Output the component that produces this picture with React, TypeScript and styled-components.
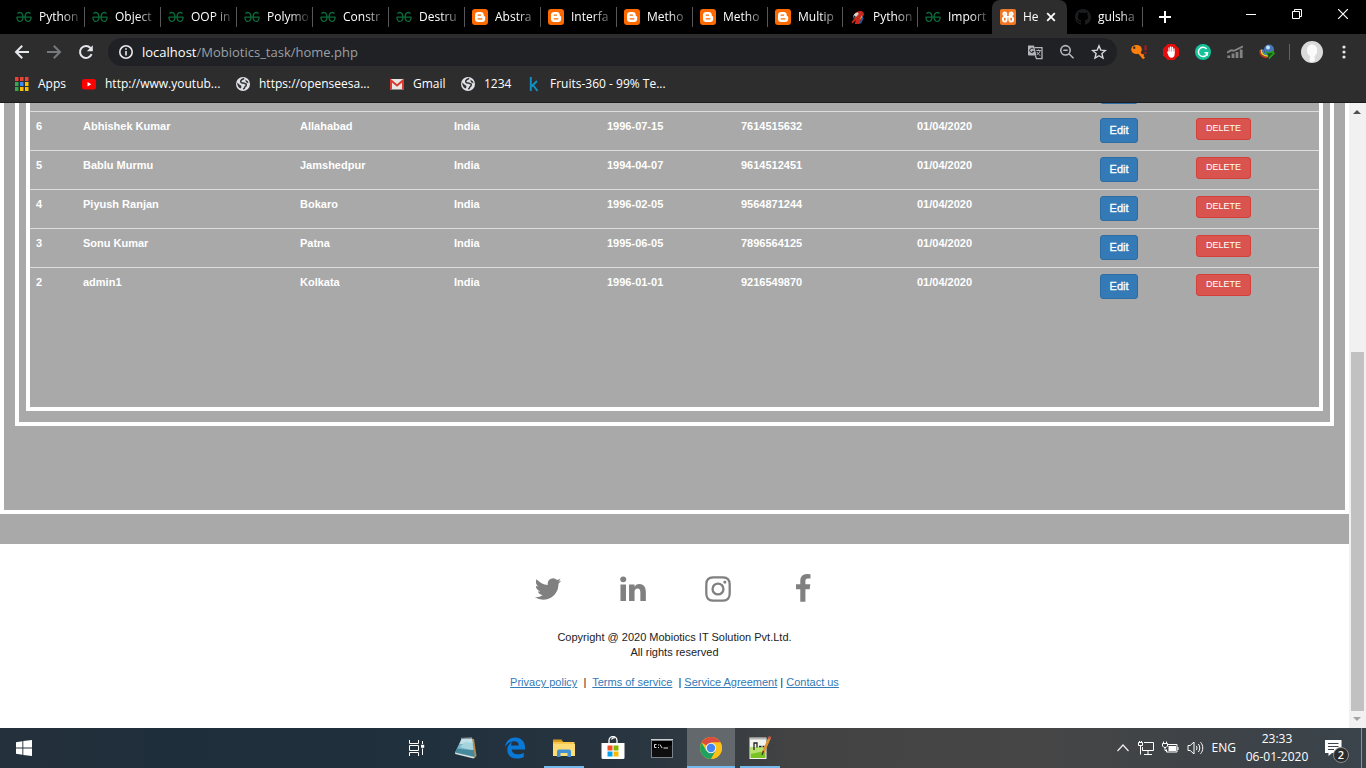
import React from "react";
import styled, { createGlobalStyle, css } from "styled-components";

const uiFont = `"Segoe UI", "Open Sans", "Noto Sans", sans-serif`;
const pageFont = `"Liberation Sans", Arial, sans-serif`;

const GlobalStyle = createGlobalStyle`
  *, *::before, *::after { box-sizing: border-box; }
  html, body, #root { height: 100%; margin: 0; }
  body { background: #fff; overflow: hidden; }
  button { font: inherit; color: inherit; background: none; border: 0; padding: 0; margin: 0; }
  svg { display: block; flex: none; }
`;

const Screen = styled.div`
  display: flex;
  flex-direction: column;
  height: 100vh;
`;

/* ---------- browser chrome ---------- */

const TabStrip = styled.header`
  display: flex;
  height: 34px;
  padding-left: 8px;
  background: #000;
  color: #fff;
  font: 12px/16px ${uiFont};
`;

const TabList = styled.div`
  display: grid;
  grid-template-columns: repeat(9, minmax(0, 76fr)) repeat(6, minmax(0, 75fr));
  flex: 0 1 1134px;
  min-width: 0;
`;

const Tab = styled.button<{ $active?: boolean; $divider?: boolean }>`
  position: relative;
  display: flex;
  align-items: center;
  min-width: 0;
  gap: 7px;
  padding: 0 ${(p) => (p.$active ? 11 : 2)}px 0 8px;
  ${(p) =>
    p.$divider &&
    css`
      &::after {
        content: "";
        position: absolute;
        right: -1px;
        top: 7px;
        width: 1px;
        height: 20px;
        background: #55575a;
      }
    `}
  ${(p) =>
    p.$active &&
    css`
      background: #2d2d2d;
      border-radius: 8px 8px 0 0;
    `}
`;

const TabTitle = styled.span`
  flex: 1;
  min-width: 0;
  overflow: hidden;
  text-align: left;
  white-space: nowrap;
  mask-image: linear-gradient(to right, #000 22px, rgba(0, 0, 0, 0.2) 40px);
`;

const NewTab = styled.button`
  display: grid;
  place-items: center;
  width: 46px;
`;

const WindowControls = styled.div`
  display: flex;
  height: 28px;
  margin-left: auto;
`;

const WindowButton = styled.button`
  display: grid;
  place-items: center;
  width: 46px;
`;

const Toolbar = styled.div`
  display: flex;
  align-items: center;
  height: 36px;
  padding: 0 6px;
  background: #2d2d2d;
  color: #dee1e6;
`;

const ToolButton = styled.button`
  display: grid;
  place-items: center;
  flex: none;
  width: 32px;
  height: 28px;
`;

const AddressBar = styled.div`
  display: flex;
  align-items: center;
  flex: 1;
  min-width: 0;
  height: 28px;
  margin: 0 6px;
  padding-left: 10px;
  padding-right: 2px;
  border-radius: 14px;
  background: #202124;
`;

const Address = styled.div`
  flex: 1;
  min-width: 0;
  padding-left: 8px;
  overflow: hidden;
  white-space: nowrap;
  color: #9aa0a6;
  font: 13px/20px ${uiFont};
  b { font-weight: 400; color: #fff; }
`;

const ToolDivider = styled.span`
  width: 1px;
  height: 16px;
  margin: 0 6px;
  background: #5f6368;
`;

const Bookmarks = styled.nav`
  display: flex;
  height: 33px;
  padding: 4px 15px 8px;
  background: #2d2d2d;
  border-bottom: 1px solid #1c1c1c;
  color: #fff;
  font: 12px/20px ${uiFont};
`;

const Bookmark = styled.a<{ $width: number }>`
  display: flex;
  align-items: center;
  gap: 9px;
  width: ${(p) => p.$width}px;
  color: inherit;
  text-decoration: none;
  white-space: nowrap;
`;

/* ---------- web page ---------- */

const Viewport = styled.div`
  display: flex;
  flex: 1;
  min-height: 0;
`;

const Page = styled.main`
  display: flex;
  flex: 1;
  flex-direction: column;
  justify-content: flex-end;
  min-width: 0;
  overflow: hidden;
  background: #a9a9a9;
  font: 11px/15px ${pageFont};
`;

const Frame = styled.div<{ $pad: string }>`
  flex: none;
  border: 4px solid #fff;
  padding: ${(p) => p.$pad};
`;

const Members = styled.table`
  width: 100%;
  table-layout: fixed;
  border-collapse: collapse;
  color: #fff;
  font-weight: 700;
  line-height: 17px;
`;

const Row = styled.tr`
  height: 39px;
`;

const Cell = styled.td`
  padding: 6px 6px 7px;
  border-top: 1px solid #ddd;
  vertical-align: top;
`;

const ActionButton = styled.button<{ $danger?: boolean }>`
  display: block;
  width: ${(p) => (p.$danger ? 55 : 38)}px;
  height: ${(p) => (p.$danger ? 22 : 25)}px;
  border: 1px solid ${(p) => (p.$danger ? "#d43f3a" : "#2e6da4")};
  border-radius: 3px;
  background: ${(p) => (p.$danger ? "#d9534f" : "#337ab7")};
  color: #fff;
  font: ${(p) => (p.$danger ? "9px/13px" : "11px/15px")} ${pageFont};
  -webkit-text-stroke: ${(p) => (p.$danger ? "0" : "0.3px #fff")};
`;

const Footer = styled.footer`
  flex: none;
  height: 184px;
  margin-top: 30px;
  padding-top: 30px;
  background: #fff;
  color: #222;
  text-align: center;
`;

const Social = styled.div`
  display: flex;
  justify-content: center;
  gap: 55px;
  margin-bottom: 26px;
  padding-left: 2px;
  color: #808080;
  a { color: inherit; }
`;

const Line = styled.p`
  margin: 0;
`;

const FooterLinks = styled(Line)`
  margin-top: 15px;
  white-space: pre-wrap;
  a { color: #337ab7; text-decoration: underline; }
`;

const Scrollbar = styled.div`
  display: flex;
  flex-direction: column;
  align-items: center;
  width: 17px;
  padding-right: 1px;
  background: #f1f1f1;
`;

const ScrollSpace = styled.div`
  flex: 1;
  padding-top: 7px;
`;

const Thumb = styled.div`
  width: 13px;
  height: 57.5%;
  margin-bottom: 6px;
  background: #c1c1c1;
`;

const ScrollEnd = styled.div`
  height: 11px;
`;

/* ---------- taskbar ---------- */

const Taskbar = styled.footer`
  display: flex;
  height: 40px;
  background: linear-gradient(90deg, #24313c 0%, #1f2e3b 12%, #20303d 32%, #2a3640 48%, #434343 58%, #464646 76%, #3e4347 88%, #3a434b 100%);
  color: #fff;
  font: 12px/18px ${uiFont};
`;

const Start = styled.button`
  display: grid;
  place-items: center;
  width: 48px;
`;

const Apps = styled.div`
  display: flex;
  gap: 1px;
  margin-left: 25%;
  padding-left: 3px;
`;

const AppButton = styled.button<{ $running?: boolean; $active?: boolean }>`
  display: grid;
  place-items: center;
  width: 48px;
  height: 40px;
  ${(p) => p.$active && "background: #63686c;"}
  ${(p) =>
    p.$running &&
    css`
      background-image: linear-gradient(#76b9ed, #76b9ed);
      background-repeat: no-repeat;
      background-position: bottom center;
      background-size: ${p.$active ? "48px" : "40px"} 2px;
    `}
`;

const Tray = styled.div`
  display: flex;
  align-items: center;
  gap: 8px;
  margin-left: auto;
`;

const Clock = styled.time`
  width: 64px;
  margin-left: 1px;
  margin-right: 5px;
  text-align: center;
  white-space: nowrap;
`;

const Notices = styled.button`
  position: relative;
  display: flex;
  align-items: center;
  width: 34px;
  height: 40px;
  padding-left: 3px;
`;

const Badge = styled.span`
  position: absolute;
  left: 11px;
  top: 19px;
  width: 16px;
  height: 16px;
  border: 1px solid #8d8d8d;
  border-radius: 50%;
  background: #2c2c2c;
  font: 600 11px/14px ${uiFont};
`;

const ShowDesktop = styled.span`
  width: 5px;
  height: 40px;
  margin-left: -3px;
  border-left: 1px solid #8b9095;
`;

/* ---------- icons ---------- */

const Geeks = () => (
  <svg width="16" height="16" viewBox="0 0 16 16" fill="none" stroke="#0b6b3a" strokeWidth="1.3">
    <path d="M.5 8.200h15M1.500 4.600C2.500 3.500 4 3.300 5.200 3.900 7.600 5.200 7.500 10.600 5.300 12 3.500 13 1.300 12 1 9.500V8.200M14.500 4.600C13.500 3.500 12 3.300 10.800 3.900 8.400 5.200 8.500 10.600 10.700 12c1.800 1 4 0 4.300-2.500V8.200" />
  </svg>
);

const Blogger = () => (
  <svg width="16" height="16" viewBox="0 0 16 16">
    <rect width="16" height="16" rx="3" fill="#ff6a00" />
    <path d="M6.200 3h2.600C10.600 3 11.800 4.300 11.800 6c0 .9.2 1.100.8 1.200.5.100.6.300.6.700V10c0 1.900-1.200 3-3 3H6c-1.800 0-3-1.200-3-3V6c0-1.800 1.300-3 3.200-3z" fill="#fff" />
    <path d="M6.200 6.200h2.300M6.200 9.800h3.700" stroke="#ff6a00" strokeWidth="1.300" strokeLinecap="round" />
  </svg>
);

const Parrot = () => (
  <svg width="16" height="16" viewBox="0 0 16 16">
    <path d="M5 4.500C7 1.500 12.500.8 13.800 4c.7 2.200-1 4-2.300 6l-2 5H4.800l1-4L2.500 14.500 1.500 13 5.500 8z" fill="#c6281c" />
    <path d="M5.500 4c1.500-1 3.200-.5 3.200 1L6.500 7.500 3.500 9.500C2.800 7 3.800 5 5.500 4z" fill="#d9d2ca" />
    <path d="M4.200 6.500L2.500 10.500l3.300-3z" fill="#23201f" />
    <path d="M12.500 6.500l1 3-2.500 5H9.500z" fill="#1f5da8" />
    <path d="M12 6L9.500 10.500l2.800-2z" fill="#e0a321" />
  </svg>
);

const Xampp = () => (
  <svg width="16" height="16" viewBox="0 0 16 16">
    <rect width="16" height="16" rx="2" fill="#f37623" />
    <g fill="none" stroke="#fff" strokeWidth="1.900" strokeLinecap="round">
      <path d="M3.300 5.200C3.300 3 6.300 3 6.300 5.200S5.800 7.800 4.700 7.900C2.300 8.200 2.300 12.600 4.700 12.600S6.700 10.500 6.500 8z" />
      <path d="M12.700 5.200C12.700 3 9.700 3 9.700 5.200s.5 2.600 1.600 2.700c2.400.3 2.400 4.700 0 4.700S9.300 10.500 9.500 8z" />
      <path d="M6.300 7.900h3.400" />
    </g>
  </svg>
);

const Octocat = () => (
  <svg width="16" height="16" viewBox="0 0 16 16" fill="#1b1c1e">
    <path d="M8 0C3.580 0 0 3.580 0 8c0 3.540 2.290 6.530 5.470 7.590.4.070.55-.17.55-.38 0-.19-.01-.82-.01-1.490-2.010.37-2.530-.49-2.690-.94-.09-.23-.48-.94-.82-1.130-.28-.15-.68-.52-.01-.53.63-.01 1.080.58 1.230.82.72 1.210 1.870.87 2.330.66.070-.52.28-.87.51-1.070-1.780-.2-3.640-.89-3.640-3.950 0-.87.31-1.590.82-2.150-.08-.2-.36-1.020.08-2.120 0 0 .67-.21 2.200.82.64-.18 1.320-.27 2-.27s1.360.09 2 .27c1.530-1.040 2.200-.82 2.200-.82.44 1.100.16 1.920.08 2.120.51.56.82 1.270.82 2.150 0 3.070-1.870 3.750-3.650 3.950.29.25.54.73.54 1.480 0 1.070-.01 1.930-.01 2.200 0 .21.15.46.55.38A8.010 8.010 0 0 0 16 8c0-4.420-3.580-8-8-8z" />
  </svg>
);

const Cross = () => (
  <svg width="10" height="10" viewBox="0 0 10 10" stroke="#fff" strokeWidth="1.800">
    <path d="M1.200 1.200l7.600 7.600M8.800 1.200L1.200 8.800" />
  </svg>
);

const Globe = () => (
  <svg width="14" height="14" viewBox="0 0 14 14">
    <circle cx="7" cy="7" r="7" fill="#dfe1e5" />
    <path d="M8.200 1.500C6.500 2 5 2.600 4.700 4c-.2 1.500 1 2 2.600 2 1.500.1 1.800 1.200 3 1.300l-.3 1.600c-1.200.2-1.300 1.200-1.500 2L7.300 12.300" fill="none" stroke="#333437" strokeWidth="1.500" />
    <path d="M1.200 5.600l2.500 2.200 1.600 1v1.900l-1 .8C2.300 10.500 1 8 1.200 5.600z" fill="#333437" />
    <path d="M9.200 2.500l2.600 1.700.8 2-2.600-.9z" fill="#333437" />
  </svg>
);

const AppsGrid = () => {
  const colors = ["#ea4335", "#ea4335", "#ea4335", "#34a853", "#4285f4", "#fbbc05", "#34a853", "#fbbc05", "#fbbc05"];
  return (
    <svg width="14" height="14" viewBox="0 0 14 14">
      {colors.map((c, i) => (
        <rect key={i} x={(i % 3) * 5} y={Math.floor(i / 3) * 5} width="3.500" height="4" fill={c} />
      ))}
    </svg>
  );
};

const YouTube = () => (
  <svg width="14" height="14" viewBox="0 0 14 14">
    <rect y="2" width="14" height="10.500" rx="2.500" fill="#f00" />
    <path d="M5.500 5v4.500L9.300 7.200z" fill="#fff" />
  </svg>
);

const Gmail = () => (
  <svg width="14" height="14" viewBox="0 0 14 14">
    <rect y="2" width="14" height="10.500" rx="1" fill="#e8e6e4" />
    <path d="M1 12.500V3.500L7 8.500l6-5v9" fill="none" stroke="#d93a2d" strokeWidth="2" />
  </svg>
);

const Kaggle = () => (
  <svg width="14" height="16" viewBox="0 0 14 16" fill="none" stroke="#1590c6" strokeWidth="1.900">
    <path d="M3.800 1v14M10 5L4.500 10.500M6 9l4.500 6" />
  </svg>
);

const Back = ({ dim }: { dim?: boolean }) => (
  <svg width="16" height="16" viewBox="0 0 16 16" fill="none" stroke={dim ? "#77797c" : "#e4e6ea"} strokeWidth="2" transform={dim ? "scale(-1 1)" : undefined}>
    <path d="M15 8H2.500M8.200 1.700L2 8l6.200 6.300" />
  </svg>
);

const Reload = () => (
  <svg width="16" height="16" viewBox="0 0 16 16" fill="none" stroke="#e4e6ea" strokeWidth="2">
    <path d="M13.600 10.200A6 6 0 1 1 12.500 4" />
    <path d="M14.800 1.200v6H8.800z" fill="#e4e6ea" stroke="none" />
  </svg>
);

const Info = () => (
  <svg width="16" height="16" viewBox="0 0 16 16" fill="none" stroke="#e8eaed" strokeWidth="1.600">
    <circle cx="8" cy="8" r="6.200" />
    <path d="M8 7v4.500M8 4.200v1.600" />
  </svg>
);

const Translate = () => (
  <svg width="16" height="16" viewBox="0 0 16 16" fill="none">
    <path d="M1 1.500h6l2.500 10H2a1 1 0 0 1-1-1z" fill="#b3b6ba" />
    <path d="M7.500 3.700H15v11H9.500L8.300 11.500" stroke="#b3b6ba" strokeWidth="1.300" />
    <path d="M6.700 5A2.200 2.200 0 1 0 7 7.300H5" stroke="#202124" strokeWidth="1" />
    <path d="M9.300 6.500h4.600M11.500 5.500v1M13.200 6.500c-.4 1.800-1.800 3.500-3 4.200M10 8c.7 1.500 2 2.800 3.300 3.400" stroke="#b3b6ba" strokeWidth="1" />
  </svg>
);

const ZoomOut = () => (
  <svg width="16" height="16" viewBox="0 0 16 16" fill="none" stroke="#b5b8bd" strokeWidth="1.600">
    <circle cx="6.500" cy="6.300" r="4.700" />
    <path d="M10 9.800l4.500 4.500M4.300 6.300h4.400" />
  </svg>
);

const Star = () => (
  <svg width="16" height="16" viewBox="0 0 16 16" fill="none" stroke="#d5d7db" strokeWidth="1.400">
    <path d="M8 1.800l1.800 4.300 4.600.400-3.500 3 1.100 4.600L8 11.700l-4 2.400 1.100-4.600-3.500-3 4.600-.400z" />
  </svg>
);

const KeyIcon = () => (
  <svg width="18" height="16" viewBox="0 0 18 16">
    <path d="M8.500 8l5.500 6.500" stroke="#ff7f0e" strokeWidth="2.600" />
    <path d="M11.500 12l2.200-1.500" stroke="#ff7f0e" strokeWidth="2" />
    <ellipse cx="6.500" cy="5.500" rx="5.300" ry="4.500" fill="#ff7f0e" />
    <circle cx="4.200" cy="3.800" r="1.200" fill="#2d2d2d" />
    <path d="M15.500 1.500v5M15.500 8v2" stroke="#c1121f" strokeWidth="2" />
  </svg>
);

const Adblock = () => (
  <svg width="16" height="16" viewBox="0 0 16 16">
    <path d="M4.700 0h6.600L16 4.700v6.600L11.300 16H4.700L0 11.300V4.700z" fill="#e40d0d" />
    <path d="M6 8V4M7.700 7.500V2.900M9.400 7.500V3.300M11 8.500V4.800" stroke="#fff" strokeWidth="1.300" strokeLinecap="round" />
    <path d="M4 7.800l1.300-.3h6.300v2.800c0 2.300-1.300 3.500-3 3.500-2 0-2.600-1-3.400-2.700z" fill="#fff" />
  </svg>
);

const Grammarly = () => (
  <svg width="16" height="16" viewBox="0 0 16 16">
    <circle cx="8" cy="8" r="8" fill="#15c39a" />
    <path d="M11.500 5A4.600 4.600 0 1 0 12.500 8.700H9.500M12.300 8.700v3" fill="none" stroke="#fff" strokeWidth="1.500" />
  </svg>
);

const Analytics = () => (
  <svg width="16" height="16" viewBox="0 0 16 16" fill="none" stroke="#828282">
    <path d="M1.800 14v-2.500M6 14V9.500M10 14V8M14.200 14V5.500" strokeWidth="2.800" />
    <path d="M0 8.700L4 6.300l3 .5L16 2.500" strokeWidth="2" />
  </svg>
);

const Idm = () => (
  <svg width="16" height="16" viewBox="0 0 16 16">
    <circle cx="10" cy="5.500" r="5" fill="#4578b8" />
    <circle cx="9" cy="3.500" r="2" fill="#c7e0f5" />
    <g fill="none" strokeWidth="1.600">
      <path d="M1.200 6C.5 10.500 3.500 13.500 8.500 13.500" stroke="#c9301f" />
      <path d="M2.500 5.500C2 9.500 4.500 12 9 12" stroke="#e8d81e" />
      <path d="M4 5.500c-.3 3 1.500 5 5 5" stroke="#3f8fd0" />
    </g>
    <path d="M6 7.500l4.500.5L14 6.500l2 3-6 6-.5-3.500z" fill="#2b9a1f" />
    <path d="M8 9.500l6-.5-3.800 4z" fill="#10560c" />
  </svg>
);

const Avatar = () => (
  <svg width="22" height="22" viewBox="0 0 22 22">
    <circle cx="11" cy="11" r="11" fill="#dadada" />
    <path d="M11 3.500c3.300 0 5.200 2.500 5.200 5.700 0 2.800-1 5-2.700 6l.5 4.300c-1.500 1.500-4 1.800-5.500 1l.5-5.500c-2-1-3-3-3-5.800C6 6 8 3.500 11 3.500z" fill="#fafafa" />
  </svg>
);

const Dots = () => (
  <svg width="4" height="14" viewBox="0 0 4 14" fill="#e4e6ea">
    <circle cx="2" cy="2" r="1.600" />
    <circle cx="2" cy="7" r="1.600" />
    <circle cx="2" cy="12" r="1.600" />
  </svg>
);

const Arrow = ({ down }: { down?: boolean }) => (
  <svg width="8" height="4" viewBox="0 0 8 4" fill={down ? "#a3a3a3" : "#505050"}>
    <path d={down ? "M0 0h8L4 4z" : "M0 4h8L4 0z"} />
  </svg>
);

const socials: [string, string][] = [
  ["Twitter", "M1684 408q-67 98-162 167 1 14 1 42 0 130-38 259.500t-115.500 248.500-184.500 210.500-258 146-323 54.500q-271 0-496-145 35 4 78 4 225 0 401-138-105-2-188-64.500t-114-159.500q33 5 61 5 43 0 85-11-112-23-185.500-111.500t-73.500-205.500v-4q68 38 146 41-66-44-105-115t-39-154q0-88 44-163 121 149 294.500 238.500t371.500 99.500q-8-38-8-74 0-134 94.500-228.500t228.500-94.500q140 0 236 102 109-21 205-78-37 115-142 178 93-10 186-50z"],
  ["LinkedIn", "M477 625v991h-330v-991h330zm21-306q1 73-50.500 122t-135.500 49h-2q-82 0-132-49t-50-122q0-74 51.500-122.500t134.500-48.500 133 48.500 51 122.500zm1166 729v568h-329v-530q0-105-40.500-164.500t-126.500-59.500q-63 0-105.500 34.500t-63.500 85.500q-11 30-11 81v553h-329q2-399 2-647t-1-296l-1-48h329v144h-2q20-32 41-56t56.500-52 87-43.500 114.500-15.500q171 0 275 113.500t104 332.500z"],
  ["Instagram", "M1152 896q0-106-75-181t-181-75-181 75-75 181 75 181 181 75 181-75 75-181zm138 0q0 164-115 279t-279 115-279-115-115-279 115-279 279-115 279 115 115 279zm108-410q0 38-27 65t-65 27-65-27-27-65 27-65 65-27 65 27 27 65zm-502-220q-7 0-76.500-.5t-105.500 0-96.500 3-103 10-71.500 18.500q-50 20-88 58t-58 88q-11 29-18.500 71.500t-10 103-3 96.500 0 105.500.5 76.500-.5 76.500 0 105.500 3 96.500 10 103 18.500 71.500q20 50 58 88t88 58q29 11 71.500 18.500t103 10 96.500 3 105.500 0 76.500-.5 76.500.5 105.500 0 96.500-3 103-10 71.500-18.500q50-20 88-58t58-88q11-29 18.500-71.500t10-103 3-96.500 0-105.500-.5-76.500.5-76.500 0-105.500-3-96.500-10-103-18.500-71.500q-20-50-58-88t-88-58q-29-11-71.500-18.500t-103-10-96.500-3-105.500 0-76.500.5zm768 630q0 229-5 317-10 208-124 322t-322 124q-88 5-317 5t-317-5q-208-10-322-124t-124-322q-5-88-5-317t5-317q10-208 124-322t322-124q88-5 317-5t317 5q208 10 322 124t124 322q5 88 5 317z"],
  ["Facebook", "M1343 12v264h-157q-86 0-116 36t-30 108v189h293l-39 296h-254v759h-306v-759h-255v-296h255v-218q0-186 104-288.500t277-102.500q147 0 228 12z"],
];

const WindowsLogo = () => (
  <svg width="16" height="16" viewBox="0 0 16 16" fill="#fff">
    <path d="M0 2.300L6.400 1.300V7.500H0zM7.300 1.100L16 0v7.500H7.300zM0 8.500h6.400v6.200L0 13.700zM7.300 8.500H16V16L7.300 14.900z" />
  </svg>
);

const TaskView = () => (
  <svg width="17" height="16" viewBox="0 0 17 16" fill="none" stroke="#fff">
    <path d="M1.500 0v3.500h9V0M1.500 16v-3.500h9V16M1.500 5.500h9v5h-9zM14.500 1v3M14.500 8.500V15" />
    <path d="M13 4.800h3.200v3H13z" fill="#fff" stroke="none" />
  </svg>
);

const Notepad = () => (
  <svg width="24" height="22" viewBox="0 0 24 22">
    <path d="M17 1.500l3 .5 2.500 17-2.500 2.500z" fill="#b98a4a" />
    <path d="M7.500 2l10.500-.3L20.500 20 1 15.500z" fill="#79b6c6" />
    <path d="M7.500 2L18 1.700l.8 4.800L5.500 7z" fill="#c2e0e8" />
    <path d="M11 5l7.500 1L19.500 14 6 10z" fill="#a5d4de" />
    <path d="M3 11.500l8 1 9 .5.800 7L1 15.500z" fill="#46899d" />
    <path d="M1 15.500L20.500 20l-1 1.500L1.200 17z" fill="#d8e4e6" />
    <path d="M7.500 1.500L18 1" stroke="#d7dbdc" strokeWidth="1.500" strokeDasharray="1 1" />
  </svg>
);

const Edge = () => (
  <svg width="20" height="22" viewBox="0 0 20 22">
    <path d="M0 10C.8 4 4.800.5 10.300.5 16.500.5 20 5 20 10.200v2.300H6.800c.2 3.500 3 4.800 6 4.800 2.300 0 4.200-.6 6-1.600v4.200c-2 1.100-4.500 1.600-7 1.600-5.800 0-9.500-3.300-9.500-8.800 0-3.600 1.900-6.200 5-7.700-.7.900-1.200 2-1.300 3.500H13.700c.1-2.800-1.500-4.300-4.500-4.300C5.500 4.200 2.300 6.500 0 10z" fill="#0a78d6" />
  </svg>
);

const Explorer = () => (
  <svg width="22" height="20" viewBox="0 0 22 20">
    <path d="M0 2h8l2 2h11.500v14H0z" fill="#f9c84c" />
    <path d="M0 1.500h8.500L10 4H0z" fill="#d99b1c" />
    <path d="M0 6h22v12H0z" fill="#fddc75" />
    <path d="M4 19v-5.500A2 2 0 0 1 6 11.500h10a2 2 0 0 1 2 2V19h-3.500v-4h-7v4z" fill="#3f91d4" />
  </svg>
);

const Store = () => (
  <svg width="24" height="24" viewBox="0 0 24 24">
    <path d="M8 7V4.500a4 4 0 0 1 8 0V7M10.500 3.500A3 3 0 0 1 13.500 2" fill="none" stroke="#fff" strokeWidth="1.300" />
    <path d="M.5 7h23v14.500a1.500 1.500 0 0 1-1.500 1.500H2A1.500 1.500 0 0 1 .5 21.500z" fill="#fff" />
    <path d="M6.500 9.500h5v5h-5z" fill="#f25022" />
    <path d="M12.500 9.500h5v5h-5z" fill="#7fba00" />
    <path d="M6.500 15.500h5v5h-5z" fill="#00a4ef" />
    <path d="M12.500 15.500h5v5h-5z" fill="#ffb900" />
  </svg>
);

const Terminal = () => (
  <svg width="22" height="19" viewBox="0 0 22 19">
    <rect width="22" height="19" fill="#7c8388" />
    <rect x="1" y="2" width="20" height="16" fill="#000" />
    <path d="M0 .5h22" stroke="#c9ced1" />
    <path d="M5.500 5.500H3.500v3h2M7.500 5.500v1M7.500 8v1M9 5.500l2 3.500M12.500 9H17" fill="none" stroke="#ddd" />
    <path d="M1 11L21 6v12H1z" fill="#fff" opacity=".06" />
  </svg>
);

const Chrome = () => (
  <svg width="22" height="22" viewBox="0 0 22 22">
    <circle cx="11" cy="11" r="11" fill="#fbc116" />
    <path d="M11 11L1.500 5.500A11 11 0 0 1 20.500 5.500H11z" fill="#dd4b3e" />
    <path d="M1.500 5.500A11 11 0 0 0 11 22l4.800-8.300L11 11 6.200 13.700z" fill="#1da261" />
    <path d="M11 5.500h9.500A11 11 0 0 1 11 22l4.800-8.200z" fill="#fbc116" />
    <circle cx="11" cy="11" r="5.200" fill="#f1f1f1" />
    <circle cx="11" cy="11" r="4.200" fill="#4285f4" />
  </svg>
);

const NotepadPlus = () => (
  <svg width="24" height="24" viewBox="0 0 24 24">
    <path d="M1.500 1.500h17V23h-17z" fill="#f4f4ef" />
    <path d="M2.500 11h15v11h-15z" fill="#79c423" />
    <path d="M2.500 11h15v4l-15 3z" fill="#b6e26b" />
    <path d="M2.500 2.500h15" stroke="#777" strokeDasharray="1 1" strokeWidth="2" />
    <path d="M6 14V7h3v4.500M11 10.500h2.500M14.500 10.500h2" fill="none" stroke="#222" strokeWidth="1.300" />
    <path d="M21.500 2l-6.500 15" stroke="#e0912c" strokeWidth="2.600" />
    <path d="M22.200.5l-1 2.500" stroke="#c9554d" strokeWidth="2.600" />
    <path d="M15.500 15l-1.500 4" stroke="#333" strokeWidth="1.200" />
  </svg>
);

const Chevron = () => (
  <svg width="14" height="16" viewBox="0 0 14 16" fill="none" stroke="#eee" strokeWidth="1.200">
    <path d="M1.500 11L7 5l5.500 6" />
  </svg>
);

const Network = () => (
  <svg width="16" height="16" viewBox="0 0 16 16" fill="none" stroke="#fff">
    <path d="M6 2.500h9.500v8H4.500V7M10 10.500v3.500M6 14.500h8" />
    <path d="M.5 2.500h4v3h-4zM2.500 5.500v9M1.500 1v1.500M3.500 1v1.500" />
  </svg>
);

const Battery = () => (
  <svg width="17" height="16" viewBox="0 0 17 16" fill="none" stroke="#fff">
    <path d="M6 4.500h9v7.500H4.500V9.500M16 7v3" />
    <path d="M6.500 6h7.500v5H6.500z" fill="#fff" stroke="none" />
    <path d="M1.500 1.500v2M4.500 1.500v2M.5 3.500h5V6L4 7.500H2L.5 6zM3 7.500v3h1.500" />
  </svg>
);

const Speaker = () => (
  <svg width="17" height="16" viewBox="0 0 17 16" fill="none" stroke="#fff">
    <path d="M1 5.500h2.200L7 2v12l-3.800-3.500H1zM9.200 5.800c1 1.200 1 3.200 0 4.400M11.300 4c2 2.200 2 5.800 0 8M13.500 2.200c3 3.200 3 8.400 0 11.600" />
  </svg>
);

const NoticeIcon = () => (
  <svg width="17" height="18" viewBox="0 0 17 18">
    <path d="M0 1h16.500v13H7l-3.500 3V14H0z" fill="#fff" />
    <path d="M3 4.500h10.500M3 7.500h10.500M3 10.500h6" stroke="#3d444a" />
  </svg>
);

/* ---------- data ---------- */

const tabs: { title: string; icon: React.FC }[] = [
  { title: "Python", icon: Geeks },
  { title: "Object", icon: Geeks },
  { title: "OOP in", icon: Geeks },
  { title: "Polymo", icon: Geeks },
  { title: "Constr", icon: Geeks },
  { title: "Destru", icon: Geeks },
  { title: "Abstra", icon: Blogger },
  { title: "Interfa", icon: Blogger },
  { title: "Metho", icon: Blogger },
  { title: "Metho", icon: Blogger },
  { title: "Multip", icon: Blogger },
  { title: "Python", icon: Parrot },
  { title: "Import", icon: Geeks },
  { title: "He", icon: Xampp },
  { title: "gulsha", icon: Octocat },
];
const activeTab = 13;

const bookmarks: { label: string; icon: React.FC; width: number }[] = [
  { label: "Apps", icon: AppsGrid, width: 67 },
  { label: "http://www.youtub...", icon: YouTube, width: 154 },
  { label: "https://openseesa...", icon: Globe, width: 154 },
  { label: "Gmail", icon: Gmail, width: 71 },
  { label: "1234", icon: Globe, width: 66 },
  { label: "Fruits-360 - 99% Te...", icon: Kaggle, width: 160 },
];

const columns = [47, 217, 154, 153, 134, 176, 183, 96, 129];

const members = [
  ["6", "Abhishek Kumar", "Allahabad", "India", "1996-07-15", "7614515632", "01/04/2020"],
  ["5", "Bablu Murmu", "Jamshedpur", "India", "1994-04-07", "9614512451", "01/04/2020"],
  ["4", "Piyush Ranjan", "Bokaro", "India", "1996-02-05", "9564871244", "01/04/2020"],
  ["3", "Sonu Kumar", "Patna", "India", "1995-06-05", "7896564125", "01/04/2020"],
  ["2", "admin1", "Kolkata", "India", "1996-01-01", "9216549870", "01/04/2020"],
];

const taskApps: { name: string; icon: React.FC; running?: boolean; active?: boolean }[] = [
  { name: "Task View", icon: TaskView },
  { name: "Notepad", icon: Notepad },
  { name: "Edge", icon: Edge },
  { name: "File Explorer", icon: Explorer, running: true },
  { name: "Store", icon: Store },
  { name: "Command Prompt", icon: Terminal },
  { name: "Chrome", icon: Chrome, running: true, active: true },
  { name: "Notepad++", icon: NotepadPlus, running: true },
];

export default function App() {
  return (
    <Screen>
      <GlobalStyle />
      <TabStrip>
        <TabList>
          {tabs.map(({ title, icon: Icon }, i) => (
            <Tab key={i} $active={i === activeTab} $divider={i !== activeTab && i !== activeTab - 1}>
              <Icon />
              <TabTitle>{title}</TabTitle>
              {i === activeTab && <Cross />}
            </Tab>
          ))}
        </TabList>
        <NewTab aria-label="New tab">
          <svg width="12" height="12" viewBox="0 0 12 12" stroke="#fff" strokeWidth="2">
            <path d="M6 0v12M0 6h12" />
          </svg>
        </NewTab>
        <WindowControls>
          <WindowButton aria-label="Minimize">
            <svg width="10" height="10" viewBox="0 0 10 10" stroke="#fff"><path d="M0 5.500h10" /></svg>
          </WindowButton>
          <WindowButton aria-label="Restore">
            <svg width="10" height="10" viewBox="0 0 10 10" stroke="#fff" fill="none"><path d="M.5 2.500h7v7h-7zM2.500 2V.5h7v7H8" /></svg>
          </WindowButton>
          <WindowButton aria-label="Close">
            <svg width="10" height="10" viewBox="0 0 10 10" stroke="#fff" strokeWidth="1.200"><path d="M0 0l10 10M10 0L0 10" /></svg>
          </WindowButton>
        </WindowControls>
      </TabStrip>

      <Toolbar>
        <ToolButton aria-label="Back"><Back /></ToolButton>
        <ToolButton aria-label="Forward"><Back dim /></ToolButton>
        <ToolButton aria-label="Reload"><Reload /></ToolButton>
        <AddressBar>
          <Info />
          <Address><b>localhost</b>/Mobiotics_task/home.php</Address>
          <ToolButton aria-label="Translate"><Translate /></ToolButton>
          <ToolButton aria-label="Zoom"><ZoomOut /></ToolButton>
          <ToolButton aria-label="Bookmark"><Star /></ToolButton>
        </AddressBar>
        <ToolButton aria-label="Key"><KeyIcon /></ToolButton>
        <ToolButton aria-label="Ad blocker"><Adblock /></ToolButton>
        <ToolButton aria-label="Grammar"><Grammarly /></ToolButton>
        <ToolButton aria-label="Analytics"><Analytics /></ToolButton>
        <ToolButton aria-label="Downloads"><Idm /></ToolButton>
        <ToolDivider />
        <ToolButton aria-label="Profile"><Avatar /></ToolButton>
        <ToolButton aria-label="Menu"><Dots /></ToolButton>
      </Toolbar>

      <Bookmarks>
        {bookmarks.map(({ label, icon: Icon, width }) => (
          <Bookmark key={label} href="#" $width={width}>
            <Icon />
            {label}
          </Bookmark>
        ))}
      </Bookmarks>

      <Viewport>
        <Page>
          <Frame $pad="0 11px 84px">
            <Frame $pad="0 7px 11px">
              <Frame $pad="0 0 101px">
                <Members>
                  <colgroup>
                    {columns.map((w, i) => (
                      <col key={i} style={{ width: w }} />
                    ))}
                  </colgroup>
                  <tbody>
                    <Row>
                      <Cell colSpan={7} />
                      <Cell><ActionButton aria-label="Edit" /></Cell>
                      <Cell />
                    </Row>
                    {members.map((m) => (
                      <Row key={m[0]}>
                        {m.map((value, i) => (
                          <Cell key={i}>{value}</Cell>
                        ))}
                        <Cell><ActionButton>Edit</ActionButton></Cell>
                        <Cell><ActionButton $danger>DELETE</ActionButton></Cell>
                      </Row>
                    ))}
                  </tbody>
                </Members>
              </Frame>
            </Frame>
          </Frame>
          <Footer>
            <Social>
              {socials.map(([name, path]) => (
                <a key={name} href="#" aria-label={name}>
                  <svg width="30" height="30" viewBox="0 0 1792 1792" fill="currentColor">
                    <path d={path} />
                  </svg>
                </a>
              ))}
            </Social>
            <Line>Copyright @ 2020 Mobiotics IT Solution Pvt.Ltd.</Line>
            <Line>All rights reserved</Line>
            <FooterLinks>
              <a href="#">Privacy policy</a>{"  |  "}
              <a href="#">Terms of service</a>{"  | "}
              <a href="#">Service Agreement</a>{" | "}
              <a href="#">Contact us</a>
            </FooterLinks>
          </Footer>
        </Page>
        <Scrollbar>
          <ScrollSpace><Arrow /></ScrollSpace>
          <Thumb />
          <ScrollEnd><Arrow down /></ScrollEnd>
        </Scrollbar>
      </Viewport>

      <Taskbar>
        <Start aria-label="Start"><WindowsLogo /></Start>
        <Apps>
          {taskApps.map(({ name, icon: Icon, running, active }) => (
            <AppButton key={name} aria-label={name} $running={running} $active={active}>
              <Icon />
            </AppButton>
          ))}
        </Apps>
        <Tray>
          <Chevron />
          <Network />
          <Battery />
          <Speaker />
          <span>ENG</span>
          <Clock>23:33<br />06-01-2020</Clock>
          <Notices aria-label="Notifications">
            <NoticeIcon />
            <Badge>2</Badge>
          </Notices>
          <ShowDesktop />
        </Tray>
      </Taskbar>
    </Screen>
  );
}
